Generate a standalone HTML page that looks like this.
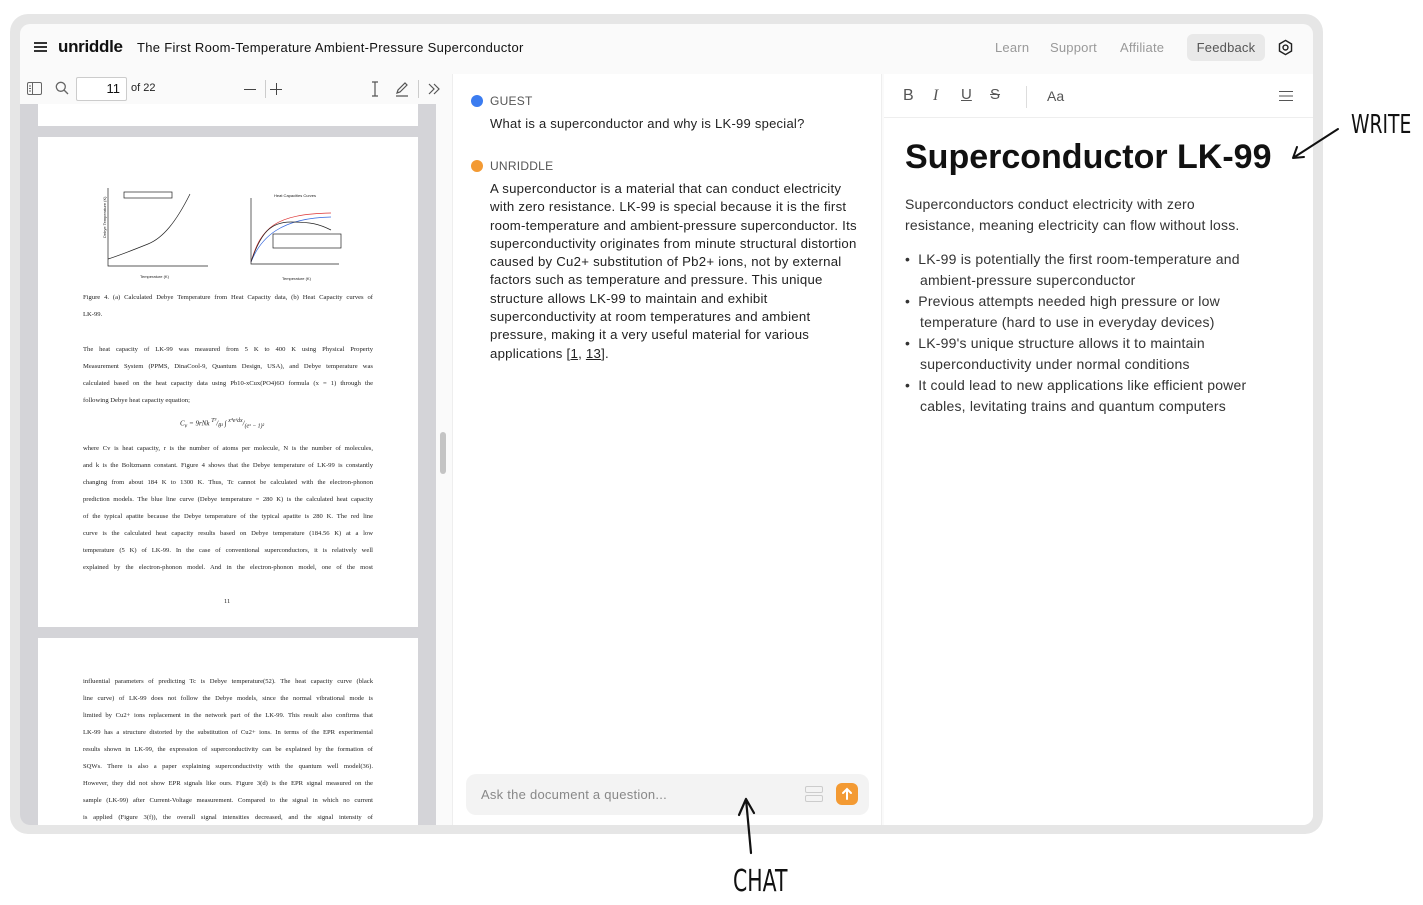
<!DOCTYPE html>
<html><head><meta charset="utf-8"><style>
*{box-sizing:border-box;margin:0;padding:0}
body{width:1423px;height:905px;background:#fff;position:relative;overflow:hidden;font-family:"Liberation Sans",sans-serif;color:#111}
.a{position:absolute}
.frame{left:10px;top:14px;width:1313px;height:820px;background:#e6e6e6;border-radius:18px}
.app{left:20px;top:24px;width:1293px;height:801px;background:#fafafa;border-radius:10px;overflow:hidden}
.pl{font-family:"Liberation Serif",serif;font-size:6.6px;color:#222;width:290px;text-align:justify;text-align-last:justify;white-space:nowrap;overflow:hidden;left:63px}
.ch{font-size:13px;color:#222;left:470px;white-space:nowrap;letter-spacing:0.25px}
.ed{font-size:14px;color:#333;white-space:nowrap;letter-spacing:0.2px}
.nav{font-size:13px;color:#999;letter-spacing:0.2px}
.tb{font-size:16px;color:#555}
</style></head><body>
<div class="a frame"></div>
<div class="a app">
 <div class="a" style="left:14px;top:18px;width:13px;height:2px;background:#333;box-shadow:0 4px 0 #333,0 8px 0 #333"></div>
 <div class="a" style="left:38px;top:13px;font-size:17px;font-weight:bold;color:#111;letter-spacing:-0.3px">unriddle</div>
 <div class="a" style="left:117px;top:16px;font-size:13px;color:#111;letter-spacing:0.3px">The First Room-Temperature Ambient-Pressure Superconductor</div>
 <div class="a nav" style="left:975px;top:16px">Learn</div>
 <div class="a nav" style="left:1030px;top:16px">Support</div>
 <div class="a nav" style="left:1100px;top:16px">Affiliate</div>
 <div class="a" style="left:1167px;top:10px;width:78px;height:27px;background:#e9e9e9;border-radius:6px;font-size:13px;color:#555;text-align:center;line-height:27px;letter-spacing:0.2px">Feedback</div>
 <svg class="a" style="left:1257px;top:15px" width="17" height="17" viewBox="0 0 24 24" fill="none" stroke="#222" stroke-width="2"><path d="M12 2l8.5 5v10L12 22l-8.5-5V7z"/><circle cx="12" cy="12" r="3.5"/></svg>

 <div class="a" style="left:0;top:50px;width:432px;height:30px;background:#fafafa"></div>
 <svg class="a" style="left:7px;top:58px" width="15" height="13" viewBox="0 0 15 13" fill="none" stroke="#666"><rect x="0.5" y="0.5" width="14" height="12" rx="1.5"/><path d="M5.5 1v11M2 4h2M2 6.5h2M2 9h2"/></svg>
 <svg class="a" style="left:35px;top:57px" width="14" height="14" viewBox="0 0 14 14" fill="none" stroke="#666" stroke-width="1.3"><circle cx="5.8" cy="5.8" r="4.5"/><path d="M9 9l4 4"/></svg>
 <div class="a" style="left:56px;top:53px;width:51px;height:24px;background:#fff;border:1px solid #ccc;border-radius:2px;font-size:13px;text-align:right;padding-right:6px;line-height:22px;color:#111">11</div>
 <div class="a" style="left:111px;top:58px;font-size:11px;color:#222">of 22</div>
 <div class="a" style="left:224px;top:65px;width:12px;height:1.3px;background:#444"></div>
 <div class="a" style="left:245px;top:56px;width:1px;height:18px;background:#ccc"></div>
 <div class="a" style="left:250px;top:65px;width:12px;height:1.3px;background:#444"></div>
 <div class="a" style="left:255.5px;top:59px;width:1.3px;height:12px;background:#444"></div>
 <svg class="a" style="left:350px;top:57px" width="10" height="16" viewBox="0 0 10 16" fill="none" stroke="#555" stroke-width="1.2"><path d="M2 1h6M2 15h6M5 1v14"/></svg>
 <svg class="a" style="left:374px;top:57px" width="16" height="16" viewBox="0 0 16 16" fill="none" stroke="#555" stroke-width="1.2"><path d="M3 12l1-3 7-7 2 2-7 7zM2 15h12"/></svg>
 <div class="a" style="left:398px;top:56px;width:1px;height:18px;background:#ccc"></div>
 <svg class="a" style="left:408px;top:59px" width="12" height="12" viewBox="0 0 12 12" fill="none" stroke="#555" stroke-width="1.2"><path d="M1 1l5 5-5 5M6 1l5 5-5 5"/></svg>

 <div class="a" style="left:0;top:80px;width:416px;height:721px;background:#d4d4d8"></div>
 <div class="a" style="left:416px;top:80px;width:16px;height:721px;background:#fafafa"></div>
 <div class="a" style="left:420px;top:408px;width:6px;height:42px;background:#c4c4c4;border-radius:3px"></div>
 <div class="a" style="left:18px;top:80px;width:380px;height:22px;background:#fff"></div>
 <div class="a" style="left:18px;top:113px;width:380px;height:490px;background:#fff"></div>
 <div class="a" style="left:18px;top:614px;width:380px;height:190px;background:#fff"></div>

 <svg class="a" style="left:70px;top:160px" width="260" height="100" viewBox="0 0 260 100" fill="none" stroke-width="0.7">
  <path d="M18 4v78h100" stroke="#222"/>
  <rect x="34" y="8" width="48" height="6" stroke="#222"/>
  <path d="M18 75c10-3 25-9 40-15s28-22 42-50" stroke="#222"/>
  <path d="M161 14v66h88" stroke="#222"/>
  <path d="M161 78c10-35 25-48 80-49" stroke="#d33"/>
  <path d="M161 78c10-25 30-44 80-45" stroke="#36d"/>
  <path d="M161 78c10-30 20-40 40-40s28 2 40 8" stroke="#222"/>
  <rect x="183" y="50" width="68" height="14" stroke="#222"/>
  <text x="2" y="60" font-size="4" fill="#222" stroke="none" transform="rotate(-90 6 50)">Debye Temperature (K)</text>
  <text x="50" y="94" font-size="4" fill="#222" stroke="none">Temperature (K)</text>
  <text x="192" y="96" font-size="4" fill="#222" stroke="none">Temperature (K)</text>
  <text x="184" y="13" font-size="4" fill="#222" stroke="none">Heat Capacities Curves</text>
 </svg>
 <div class="a pl" style="top:270px">Figure 4. (a) Calculated Debye Temperature from Heat Capacity data, (b) Heat Capacity curves of</div>
 <div class="a pl" style="top:287px;text-align-last:left">LK-99.</div>
 <div class="a pl" style="top:322px">The heat capacity of LK-99 was measured from 5 K to 400 K using Physical Property</div>
 <div class="a pl" style="top:339px">Measurement System (PPMS, DinaCool-9, Quantum Design, USA), and Debye temperature was</div>
 <div class="a pl" style="top:356px">calculated based on the heat capacity data using Pb10-xCux(PO4)6O formula (x = 1) through the</div>
 <div class="a pl" style="top:373px;text-align-last:left">following Debye heat capacity equation;</div>
 <div class="a" style="left:160px;top:394px;font-family:'Liberation Serif',serif;font-style:italic;font-size:7px;color:#222">C<sub>v</sub> = 9rNk <sup>T³</sup>/<sub>θ³</sub> ∫ <sup>x⁴eˣdx</sup>/<sub>(eˣ − 1)²</sub></div>
 <div class="a pl" style="top:421px">where Cv is heat capacity, r is the number of atoms per molecule, N is the number of molecules,</div>
 <div class="a pl" style="top:438px">and k is the Boltzmann constant. Figure 4 shows that the Debye temperature of LK-99 is constantly</div>
 <div class="a pl" style="top:455px">changing from about 184 K to 1300 K. Thus, Tc cannot be calculated with the electron-phonon</div>
 <div class="a pl" style="top:472px">prediction models. The blue line curve (Debye temperature = 280 K) is the calculated heat capacity</div>
 <div class="a pl" style="top:489px">of the typical apatite because the Debye temperature of the typical apatite is 280 K. The red line</div>
 <div class="a pl" style="top:506px">curve is the calculated heat capacity results based on Debye temperature (184.56 K) at a low</div>
 <div class="a pl" style="top:523px">temperature (5 K) of LK-99. In the case of conventional superconductors, it is relatively well</div>
 <div class="a pl" style="top:540px">explained by the electron-phonon model. And in the electron-phonon model, one of the most</div>
 <div class="a" style="left:204px;top:574px;font-family:'Liberation Serif',serif;font-size:6.6px;color:#222">11</div>
 <div class="a pl" style="top:654px">influential parameters of predicting Tc is Debye temperature(52). The heat capacity curve (black</div>
 <div class="a pl" style="top:671px">line curve) of LK-99 does not follow the Debye models, since the normal vibrational mode is</div>
 <div class="a pl" style="top:688px">limited by Cu2+ ions replacement in the network part of the LK-99. This result also confirms that</div>
 <div class="a pl" style="top:705px">LK-99 has a structure distorted by the substitution of Cu2+ ions. In terms of the EPR experimental</div>
 <div class="a pl" style="top:722px">results shown in LK-99, the expression of superconductivity can be explained by the formation of</div>
 <div class="a pl" style="top:739px">SQWs. There is also a paper explaining superconductivity with the quantum well model(36).</div>
 <div class="a pl" style="top:756px">However, they did not show EPR signals like ours. Figure 3(d) is the EPR signal measured on the</div>
 <div class="a pl" style="top:773px">sample (LK-99) after Current-Voltage measurement. Compared to the signal in which no current</div>
 <div class="a pl" style="top:790px">is applied (Figure 3(f)), the overall signal intensities decreased, and the signal intensity of</div>

 <div class="a" style="left:432px;top:50px;width:430px;height:751px;background:#fff;border-left:1px solid #eee;border-right:1px solid #eee"></div>
 <div class="a" style="left:451px;top:71px;width:12px;height:12px;border-radius:50%;background:#3b7cf0"></div>
 <div class="a ch" style="top:70px;font-size:12px;color:#555">GUEST</div>
 <div class="a ch" style="top:92px">What is a superconductor and why is LK-99 special?</div>
 <div class="a" style="left:451px;top:136px;width:12px;height:12px;border-radius:50%;background:#f39a33"></div>
 <div class="a ch" style="top:135px;font-size:12px;color:#555">UNRIDDLE</div>
 <div class="a ch" style="top:156px;line-height:18.3px;font-size:13.2px">A superconductor is a material that can conduct electricity<br>with zero resistance. LK-99 is special because it is the first<br>room-temperature and ambient-pressure superconductor. Its<br>superconductivity originates from minute structural distortion<br>caused by Cu2+ substitution of Pb2+ ions, not by external<br>factors such as temperature and pressure. This unique<br>structure allows LK-99 to maintain and exhibit<br>superconductivity at room temperatures and ambient<br>pressure, making it a very useful material for various<br>applications [<u>1</u>, <u>13</u>].</div>
 <div class="a" style="left:446px;top:750px;width:403px;height:41px;background:#f3f3f3;border-radius:10px"></div>
 <div class="a" style="left:461px;top:763px;font-size:13px;color:#888;letter-spacing:0.25px">Ask the document a question...</div>
 <div class="a" style="left:785px;top:762px;width:18px;height:7px;border:1.3px solid #ccc;border-radius:2px"></div>
 <div class="a" style="left:785px;top:771px;width:18px;height:7px;border:1.3px solid #ccc;border-radius:2px"></div>
 <div class="a" style="left:816px;top:759px;width:22px;height:22px;background:#f39a33;border-radius:6px"></div>
 <svg class="a" style="left:816px;top:759px" width="22" height="22" viewBox="0 0 22 22" fill="none" stroke="#fff" stroke-width="2" stroke-linecap="round"><path d="M11 16V6M7 10l4-4 4 4"/></svg>

 <div class="a" style="left:864px;top:50px;width:429px;height:751px;background:#fff"></div>
 <div class="a" style="left:864px;top:93px;width:429px;height:1px;background:#eee"></div>
 <div class="a tb" style="left:883px;top:63px">B</div>
 <div class="a tb" style="left:913px;top:63px;font-family:'Liberation Serif',serif;font-style:italic">I</div>
 <div class="a tb" style="left:941px;top:62px;text-decoration:underline;font-size:15px">U</div>
 <div class="a tb" style="left:970px;top:62px;text-decoration:line-through;font-size:15px">S</div>
 <div class="a" style="left:1006px;top:62px;width:1px;height:22px;background:#ddd"></div>
 <div class="a tb" style="left:1027px;top:64px;font-size:14px">Aa</div>
 <div class="a" style="left:1259px;top:67px;width:14px;height:1.3px;background:#555;box-shadow:0 4.5px 0 #555,0 9px 0 #555"></div>
 <div class="a" style="left:885px;top:114px;font-size:34px;font-weight:bold;color:#111;letter-spacing:0px">Superconductor LK-99</div>
 <div class="a ed" style="left:885px;top:170px;line-height:21px">Superconductors conduct electricity with zero<br>resistance, meaning electricity can flow without loss.</div>
 <div class="a ed" style="left:885px;top:225px;line-height:21px">
  <div>•&nbsp; LK-99 is potentially the first room-temperature and</div>
  <div style="padding-left:15px">ambient-pressure superconductor</div>
  <div>•&nbsp; Previous attempts needed high pressure or low</div>
  <div style="padding-left:15px">temperature (hard to use in everyday devices)</div>
  <div>•&nbsp; LK-99's unique structure allows it to maintain</div>
  <div style="padding-left:15px">superconductivity under normal conditions</div>
  <div>•&nbsp; It could lead to new applications like efficient power</div>
  <div style="padding-left:15px">cables, levitating trains and quantum computers</div>
 </div>
</div>

<div class="a" style="left:1351px;top:110px;font-family:'DejaVu Sans',sans-serif;font-size:26px;color:#111;transform:scaleX(0.72);transform-origin:left">WRITE</div>
<svg class="a" style="left:1288px;top:125px" width="54" height="40" viewBox="0 0 54 40" fill="none" stroke="#111" stroke-width="2" stroke-linecap="round"><path d="M50 4L5 33M5 33l11-1M5 33l4-11"/></svg>
<div class="a" style="left:733px;top:864px;font-family:'DejaVu Sans',sans-serif;font-size:30px;color:#111;transform:scaleX(0.68);transform-origin:left">CHAT</div>
<svg class="a" style="left:735px;top:795px" width="24" height="62" viewBox="0 0 24 62" fill="none" stroke="#111" stroke-width="2.2" stroke-linecap="round"><path d="M16 58L11 4M11 4L4 20M11 4l8 14"/></svg>
</body></html>
